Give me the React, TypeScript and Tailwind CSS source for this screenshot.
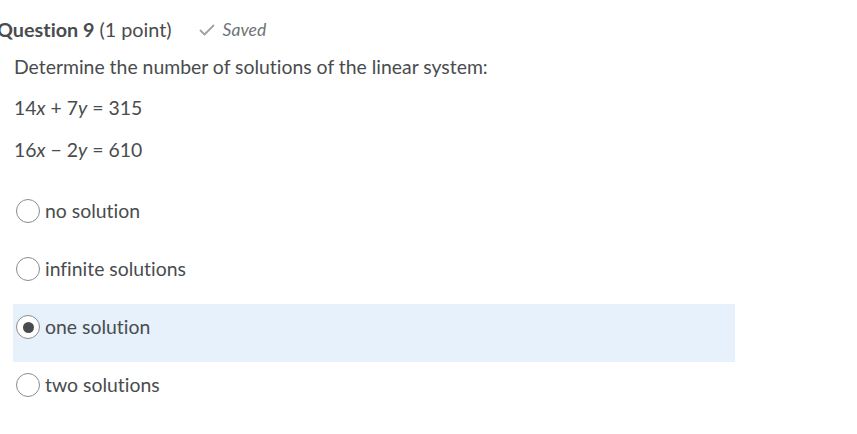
import React from "react";

const options = [
  { label: "no solution", checked: false },
  { label: "infinite solutions", checked: false },
  { label: "one solution", checked: true },
  { label: "two solutions", checked: false },
];

function Radio({ checked }: { checked: boolean }) {
  return (
    <span className="flex h-[24px] w-[24px] shrink-0 items-center justify-center rounded-full border border-[#8a8c8e] bg-white">
      {checked && <span className="h-[11px] w-[11px] rounded-full bg-[#494c4e]" />}
    </span>
  );
}

export default function App() {
  return (
    <div
      className="h-[434px] w-[857px] overflow-hidden bg-white text-[#494c4e] [font-variant-ligatures:none]"
      style={{ fontFamily: "Lato, 'Noto Sans', sans-serif" }}
    >
      <div className="flex items-center pt-[18px] -ml-[3px] h-[42px]">
        <span className="text-[19.8px] font-bold">Question 9</span>
        <span className="ml-[5px] text-[19.8px]">(1 point)</span>
        <span className="ml-[27px] flex items-center text-[#6e7376]">
          <svg width="16" height="12" viewBox="0 0 16 12" className="mr-[8px]">
            <path d="M1.5 6.5 L5.5 10.5 L14.5 1.5" fill="none" stroke="#a0a3a5" strokeWidth="1.8" strokeLinecap="round" strokeLinejoin="round" />
          </svg>
          <span className="text-[17.5px] italic">Saved</span>
        </span>
      </div>
      <div className="pl-[14px] text-[19.4px]">
        <p className="mt-[13px] leading-[24px]">Determine the number of solutions of the linear system:</p>
        <p className="mt-[17px] leading-[24px]">14<i>x</i> + 7<i>y</i> = 315</p>
        <p className="mt-[18px] leading-[24px]">16<i>x</i> − 2<i>y</i> = 610</p>
      </div>
      <div className="mt-[26px] w-[735px] pl-[13px]">
        {options.map((o) => (
          <div key={o.label} className={`flex h-[58px] items-start gap-[5px] pl-[3px] pt-[11px] ${o.checked ? "bg-[#e6f1fc]" : ""}`}>
            <Radio checked={o.checked} />
            <span className="text-[19.4px] leading-[24px]">{o.label}</span>
          </div>
        ))}
      </div>
    </div>
  );
}
